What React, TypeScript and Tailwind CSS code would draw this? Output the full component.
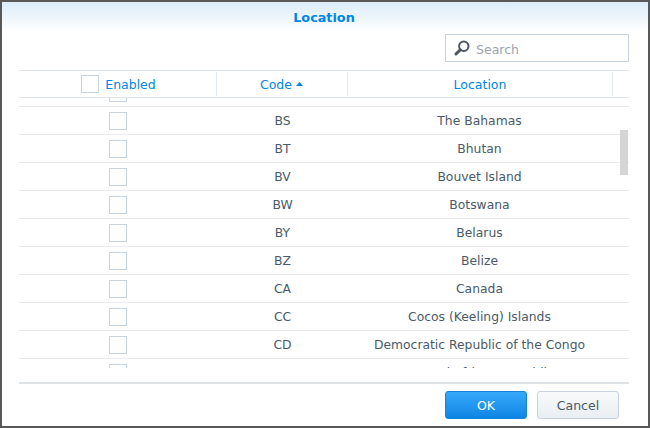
import React from "react";

const rows = [
  { code: "BS", name: "The Bahamas" },
  { code: "BT", name: "Bhutan" },
  { code: "BV", name: "Bouvet Island" },
  { code: "BW", name: "Botswana" },
  { code: "BY", name: "Belarus" },
  { code: "BZ", name: "Belize" },
  { code: "CA", name: "Canada" },
  { code: "CC", name: "Cocos (Keeling) Islands" },
  { code: "CD", name: "Democratic Republic of the Congo" },
  { code: "", name: "Central African Republic" },
];

function Box() {
  return <div className="w-[18px] h-[18px] border border-[#c6d3de] bg-white shrink-0" />;
}

function Row({ code, name }: { code: string; name: string }) {
  return (
    <div className="grid grid-cols-[198px_131px_265px] h-[28px] items-center border-b border-[#e7ebef] text-[#4a5a68] text-[12.35px]">
      <div className="flex justify-center">
        <Box />
      </div>
      <div className="text-center pt-[2px]">{code}</div>
      <div className="text-center pt-[2px] pr-[2px]">{name}</div>
    </div>
  );
}

export default function App() {
  return (
    <div className="w-[650px] h-[428px] bg-white border-2 border-[#585858] flex flex-col overflow-hidden font-['DejaVu_Sans',sans-serif] text-[12.5px]">
      {/* title */}
      <div className="h-[30px] shrink-0 flex items-center justify-center pt-[2px] pr-[2px] bg-gradient-to-b from-[#dcecf8] to-white font-bold text-[12.8px] text-[#0086e5]">
        Location
      </div>

      {/* toolbar */}
      <div className="h-[38px] shrink-0 flex items-start justify-end pt-[2px] pr-[19px]">
        <div className="w-[184px] h-[28px] border border-[#c6d3de] flex items-center pl-[8px] gap-[6px] text-[#9aa4ad]">
          <svg width="16" height="16" viewBox="0 0 16 16" fill="none" className="shrink-0">
            <circle cx="9.8" cy="6.2" r="4.7" stroke="#4d5660" strokeWidth="2" />
            <path d="M6.3 9.8 L2 14" stroke="#4d5660" strokeWidth="3" strokeLinecap="round" />
          </svg>
          <span className="pt-[5px]">Search</span>
        </div>
      </div>

      {/* table */}
      <div className="mx-[17px] w-[610px] flex flex-col">
        <div className="grid grid-cols-[198px_131px_265px_16px] h-[28px] border-y border-[#dfe5ea] items-center text-[#0086e5]">
          <div className="flex items-center justify-center gap-[6px] pl-[2px] border-r border-[#e1eaf0] h-[24px]">
            <Box />
            <span className="pt-[2px]">Enabled</span>
          </div>
          <div className="flex items-center justify-center gap-[4px] pr-[1px] border-r border-[#e1eaf0] h-[24px]">
            <span className="pt-[2px]">Code</span>
            <svg width="7" height="4" viewBox="0 0 7 4" className="shrink-0">
              <path d="M3.5 0 L7 4 H0 Z" fill="#0086e5" />
            </svg>
          </div>
          <div className="flex items-center justify-center pt-[2px] border-r border-[#e1eaf0] h-[24px]">Location</div>
          <div />
        </div>

        <div className="relative h-[270px] overflow-hidden">
          <div className="-mt-[19px]">
            <Row code="" name="" />
            {rows.map((r) => (
              <Row key={r.name} code={r.code} name={r.name} />
            ))}
          </div>
          <div className="absolute left-[601px] top-[32px] w-[8px] h-[45px] bg-[#d5d5d5]" />
        </div>

        <div className="h-[16px] border-b-2 border-[#e0e3e6]" />
      </div>

      {/* footer */}
      <div className="flex justify-end gap-[10px] pt-[7px] pr-[29px]">
        <button className="w-[82px] h-[28px] pt-[2px] rounded-[3px] border border-[#1583d8] bg-gradient-to-b from-[#35a9f8] to-[#0d85e6] text-white">
          OK
        </button>
        <button className="w-[82px] h-[28px] pt-[2px] rounded-[3px] border border-[#c6d3de] bg-gradient-to-b from-[#f8fafb] to-[#e9eef2] text-[#4a5a68]">
          Cancel
        </button>
      </div>
    </div>
  );
}
